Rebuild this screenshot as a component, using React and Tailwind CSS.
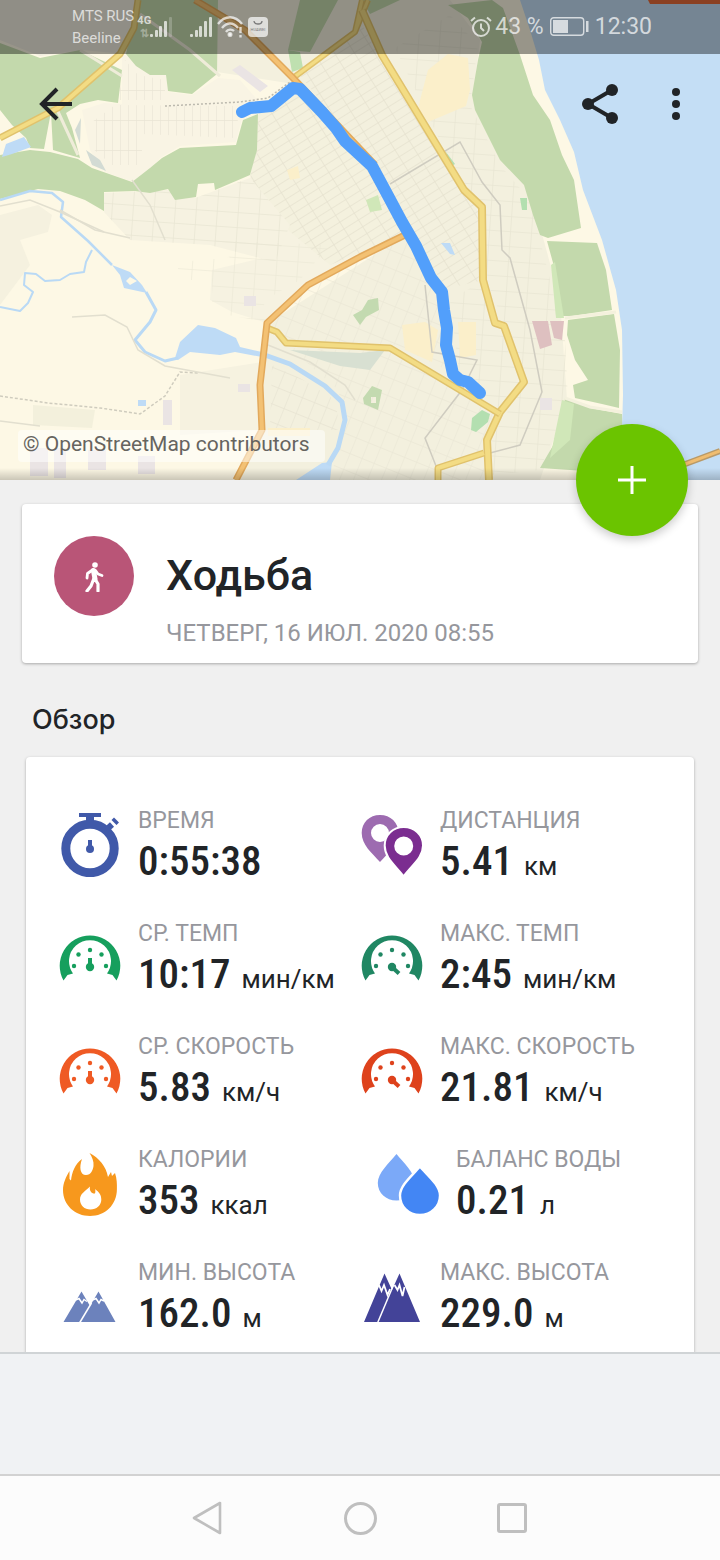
import { useState } from "react";

const BLUE = "#4059a9";

function Gauge({ color, max }) {
  return (
    <svg viewBox="0 3 64 64" className="w-16 h-16" fill={color}>
      <path d="M5.500 57.500 A30.300 30.300 0 1 1 58.500 57.500 L54.500 52 L49 50.500 A21 21 0 1 0 15 50.500 L9.500 52 Z" />
      <circle cx="16" cy="43" r="2.200" />
      <circle cx="20.500" cy="31.500" r="2.200" />
      <circle cx="32" cy="27" r="2.200" />
      <circle cx="43.500" cy="31.500" r="2.200" />
      <circle cx="48" cy="43" r="2.200" />
      <circle cx="32" cy="44" r="4.200" />
      <path
        d={max ? "M32 44 L39 50.500" : "M32 44 V35"}
        stroke={color}
        strokeWidth="4"
      />
    </svg>
  );
}

function Stopwatch() {
  return (
    <svg viewBox="0 0 64 64" className="w-16 h-16" fill="none">
      <circle cx="32" cy="35.500" r="24.200" stroke={BLUE} strokeWidth="9" />
      <path d="M21 0 H43 V4 H36 V10 H28 V4 H21 Z" fill={BLUE} />
      <path d="M48 17 L54 11.500" stroke={BLUE} strokeWidth="6" />
      <path d="M56 9.500 L58.500 7" stroke={BLUE} strokeWidth="7" />
    <circle cx="32" cy="36" r="4" fill={BLUE} />
      <path d="M32 36 V27" stroke={BLUE} strokeWidth="4" />
    </svg>
  );
}

function Pins() {
  return (
    <svg viewBox="0 0 64 64" className="w-16 h-16" fillRule="evenodd">
      <path
        fill="#9d6bb0"
        d="M20 2 C9.500 2 1.700 9.500 1.700 20 C1.700 32 12 40 20 49 C28 40 38.500 32 38.500 20 C38.500 9.500 30.500 2 20 2 Z M20 11 a9 9 0 1 1 0 18 a9 9 0 0 1 0 -18 Z"
      />
      <path
        fill="#7b2d90"
        stroke="#fff"
        strokeWidth="2"
        d="M43.700 14 C33 14 24.700 22 24.700 32.500 C24.700 45 35 52 43.700 63.300 C52 52 63 45 63 32.500 C63 22 54.500 14 43.700 14 Z M43.700 24.500 a8.500 8.500 0 1 1 0 17 a8.500 8.500 0 0 1 0 -17 Z"
      />
    </svg>
  );
}

function Flame() {
  return (
    <svg viewBox="0 0 64 64" className="w-16 h-16">
      <path
        fill="#f7981d"
        d="M31.500 1 C41 6 48 14 50 25 L53 20 L54 24 L57 21 C59 27 59 32 58.900 37 C58.900 53 47 64 32 64 C17 64 5 53 5 38 C5 31 8 25 11.500 19 L11.500 27 L13 28.500 C14 20 17 12 24 7 C21 15 22 23 28 23 C33 23 35 18 35.500 14 C36 9 34 5 31.500 1 Z"
      />
      <path
        fill="#fff"
        d="M32 34.500 C31 39 34 42 37 41.500 C37.500 39.500 37.500 38.500 37 37 C41 40 43.500 43 43.300 48 C43 53.500 38.500 57.500 32.500 57.500 C26.500 57.500 22 53.500 22 47.500 C22 41.500 27 39.500 32 34.500 Z"
      />
    </svg>
  );
}

function Drops() {
  return (
    <svg viewBox="0 0 64 64" className="w-16 h-16">
      <path
        fill="#7ba9f8"
        d="M20.500 2 C27 10 39 21 39 31 C39 41 31 48.500 20.500 48.500 C10 48.500 1.800 41 1.800 31 C1.800 21 13 11 20.500 2 Z"
      />
      <path
        fill="#4386f4"
        stroke="#fff"
        strokeWidth="2.400"
        d="M43.900 14.500 C51 23 64 33 64 43.500 C64 54.500 55 63 43.900 63 C32.500 63 24 54.500 24 43.500 C24 33 37 23 43.900 14.500 Z"
      />
    </svg>
  );
}

function LowPeaks() {
  return (
    <svg viewBox="0 0 64 64" className="w-16 h-16">
      <path fill="#6c82bc" d="M5.500 57 L23.500 26.500 L32 41 L40.500 26.500 L57.500 57 Z" />
      <path d="M21.500 58 L33.500 38" stroke="#fff" strokeWidth="1.500" />
      <path
        d="M17.500 35 L21 33.500 L24 38 L26 34.500 L29 36.500 M34.500 35 L38 33.500 L41 38 L43 34.500 L46 36"
        fill="none"
        stroke="#fff"
        strokeWidth="1.500"
      />
    </svg>
  );
}

function HighPeaks() {
  return (
    <svg viewBox="0 0 64 64" className="w-16 h-16">
      <path fill="#434398" d="M4 57 L24.500 8.500 L32 25 L39.500 8.500 L60 57 Z" />
      <path d="M17.500 58 L33.500 20" stroke="#fff" strokeWidth="1.500" />
      <path
        d="M19 20 L21.500 26 L24 20 L27.500 30 L30 24 M34.500 20 L37.500 25 L39.500 20 L42.500 31 L44.500 22"
        fill="none"
        stroke="#fff"
        strokeWidth="1.800"
      />
    </svg>
  );
}

function Road({ d, w = 7, fill = "#f3dc84", edge = "#e0c26c" }) {
  return (
    <g fill="none" strokeLinejoin="round">
      <path d={d} stroke={edge} strokeWidth={w} />
      <path d={d} stroke={fill} strokeWidth={w - 3} />
    </g>
  );
}

function RouteMap() {
  return (
    <svg
      viewBox="0 0 720 480"
      preserveAspectRatio="xMidYMid slice"
      className="block w-full h-full"
      role="img"
      aria-label="Маршрут"
    >
      <defs>
        <pattern id="blocks" width="17" height="8" patternUnits="userSpaceOnUse" patternTransform="rotate(-32)">
          <path d="M0 0 H17 M0 0 V8" stroke="#e6e2cf" fill="none" strokeWidth="1.500" />
        </pattern>
        <pattern id="grid" width="21" height="15" patternUnits="userSpaceOnUse" patternTransform="rotate(4)">
          <path d="M0 0 H21 M0 0 V15" stroke="#e9e6d4" fill="none" strokeWidth="1.500" />
        </pattern>
        <pattern id="lanes" width="8" height="30" patternUnits="userSpaceOnUse">
          <path d="M0 0 V30 M0 0 H8" stroke="#e9e5d5" fill="none" strokeWidth="1.300" />
        </pattern>
        <pattern id="slant" width="13" height="17" patternUnits="userSpaceOnUse" patternTransform="rotate(22)">
          <path d="M0 0 H13 M0 0 V17" stroke="#e7e4d2" fill="none" strokeWidth="1.300" />
        </pattern>
        <linearGradient id="fade" x1="0" y1="0" x2="0" y2="1">
          <stop offset="0" stopColor="#000" stopOpacity="0" />
          <stop offset="1" stopColor="#000" stopOpacity="0.200" />
        </linearGradient>
      </defs>

      <rect width="720" height="480" fill="#fdf8e5" />

      {/* built-up areas */}
      <path d="M0 0 H137 L125 54 L82 50 L40 56 L0 40 Z" fill="#f1eddf" />
      <path d="M217 0 H450 L480 40 L473 100 L530 190 L560 300 L567 400 L540 480 H240 L262 430 L265 325 L405 235 L330 215 L290 190 L256 180 L259 112 L300 85 L217 72 Z" fill="#f3f0de" />
      <path d="M405 235 L308 285 L267 323 L232 312 L210 300 L212 270 L275 255 L290 215 L330 205 Z" fill="#f6f2e1" />
      <path d="M258 115 L296 92 L372 170 L404 235 L330 265 L270 215 L250 180 Z" fill="#f4f1de" />
      <path d="M258 115 L296 92 L372 170 L404 235 L330 265 L270 215 L250 180 Z" fill="url(#blocks)" />
      <path d="M300 75 L362 25 L466 195 L480 210 L484 280 L440 290 L372 165 Z" fill="url(#blocks)" />
      <path d="M104 193 L168 190 L195 198 L250 178 L290 225 L275 262 L210 245 L130 240 L104 212 Z" fill="#f6f2e1" />
      <path d="M104 193 L168 190 L195 198 L250 178 L290 225 L275 262 L210 245 L130 240 L104 212 Z" fill="url(#grid)" />
      <path d="M82 110 L104 103 L122 104 L122 54 L128 56 L150 75 L166 75 L168 92 L192 95 L218 78 L240 80 L262 105 L242 118 L236 142 L180 146 L160 158 L145 178 L130 181 L105 172 L90 150 Z" fill="#f9f4e4" />
      <path d="M125 60 L138 75 L165 80 V100 H118 Z M92 122 L115 105 L240 106 L235 138 L142 134 V165 H112 L92 148 Z" fill="url(#lanes)" />
      <path d="M0 215 L38 205 L52 215 L48 232 L20 240 L30 265 L0 305 Z" fill="#f5f1df" />
      <path d="M178 262 L262 255 L265 322 L212 312 V280 H178 Z M215 240 L330 245 L300 280 L265 300 Z" fill="url(#grid)" opacity="0.700" />
      <path d="M310 285 L404 238 L440 290 L447 370 L395 345 L290 340 L268 325 Z" fill="url(#slant)" opacity="0.700" />
      <path d="M290 348 L392 352 L500 415 L486 440 L484 480 H330 L346 420 L338 390 Z" fill="url(#slant)" opacity="0.700" />
      <path d="M450 300 L484 280 L500 328 L524 382 L500 410 L460 380 Z" fill="url(#grid)" />
      <path d="M395 48 L450 15 L478 45 L470 105 L500 165 L530 200 L545 260 L565 340 L568 400 L540 470 L490 475 L490 440 L526 382 L505 325 L486 280 L484 205 L464 190 Z" fill="url(#grid)" />
      <path d="M180 375 L262 362 L262 430 L180 435 Z" fill="#f6f2e0" />
      <path d="M272 365 L300 378 L335 400 L340 430 L270 430 Z" fill="url(#slant)" />
      <path d="M33 405 L95 410 L92 428 L33 425 Z" fill="#f3f0dc" />

      {/* woodland */}
      <g fill="#c3d9ac">
        <path d="M137 0 H218 L217 74 L192 94 L168 91 L166 75 L150 75 L136 66 L126 54 Z" />
        <path d="M0 43 L40 58 L80 50 L122 70 L118 103 L98 100 L80 104 L66 113 L72 128 L80 158 L53 150 L51 112 L44 149 L30 148 L26 138 L12 125 L0 110 Z" />
        <path d="M0 155 L30 150 L50 152 L78 159 L92 168 L132 182 L150 168 L162 158 L180 148 L236 145 L243 120 L258 114 L257 150 L250 175 L215 190 L214 183 L198 184 L196 197 L175 200 L168 189 L150 193 L135 191 L104 192 V211 L85 200 L60 191 L38 189 L0 199 Z" />
        <path d="M300 0 H338 L310 52 L288 50 Z M362 0 H400 L370 14 Z" />
        <path d="M448 5 L492 0 L503 8 L520 55 L533 95 L550 120 L562 155 L574 180 L581 228 L548 238 L540 235 L533 215 L524 185 L500 160 L475 110 L472 95 L478 60 L482 42 L468 18 Z" />
        <path d="M547 241 L597 243 L606 270 L612 310 L572 316 L556 316 L555 270 Z" />
        <path d="M568 320 L614 314 L620 350 L619 408 L602 404 L575 398 L573 385 L588 380 L575 360 L567 335 Z" />
        <path d="M565 398 L590 408 L622 414 L624 440 L650 475 L600 472 L540 468 L562 430 Z" />
      </g>
      <g fill="#d0e7b8">
        <path d="M551 265 L556 318 L564 318 L555 262 Z M562 400 L574 404 L570 440 L550 458 Z" />
        <path d="M366 200 L378 195 L382 210 L370 212 Z" />
      </g>
      <path d="M288 50 L300 52 L303 68 L292 72 Z" fill="#bfe0b0" />
      <path d="M353 315 L362 310 L368 300 L378 298 L379 310 L366 317 L360 325 Z" fill="#c3dab0" />
      <path d="M363 398 L372 386 L382 390 L378 410 L364 404 Z M371 397 h5 v6 h-5 Z" fill="#c3dab0" fillRule="evenodd" />
      <path d="M472 418 L482 410 L490 414 L488 422 L476 432 L471 430 Z M446 152 L455 164 L450 167 Z M520 198 h7 v12 h-5 Z" fill="#b3dfb0" />

      {/* quarters */}
      <g fill="#fbefca">
        <path d="M428 70 L448 54 L468 58 L470 90 L466 106 L428 122 L418 108 L424 85 Z" />
        <path d="M402 325 L425 322 L438 330 L432 362 L405 350 Z M458 322 H476 V355 L460 358 Z" />
        <path d="M268 428 H310 V436 H268 Z M287 170 L298 166 L300 178 L290 180 Z" />
      </g>
      <path d="M532 321 H548 L552 345 L540 349 Z M550 321 H564 L562 340 L554 338 Z" fill="#dec0c0" />
      <g fill="#eae4e4">
        <path d="M30 448 H48 V476 H30 Z M54 448 H66 V478 H54 Z M88 450 H106 V470 H88 Z M138 456 H155 V474 H138 Z M163 400 H172 V425 H163 Z" />
        <path d="M232 70 L240 65 L268 86 L260 92 Z M244 296 h12 v10 h-12 Z M238 384 h12 v8 h-12 Z M540 398 h12 v12 h-12 Z" />
      </g>
      <path d="M290 350 L360 353 L385 350 L370 370 L340 366 Z" fill="#d8e0d2" />
      <path d="M75 130 L81 118 L80 144 Z M86 150 L100 160 L106 171 L92 165 Z" fill="#d3dbd4" />

      {/* water */}
      <path d="M520 0 H720 V480 H640 L622 430 L623 395 L622 330 L616 290 L602 240 L583 190 L574 152 L560 120 L545 90 L539 60 L530 30 Z" fill="#c4def5" />
      <g fill="#bedbf6">
        <path d="M2 157 L6 144 L24 137 L31 147 L12 154 Z" />
        <path d="M175 358 L180 342 L198 325 L215 328 L236 338 L240 347 L262 352 L262 357 L235 352 L220 355 L190 352 L178 360 Z" />
        <path d="M112 265 L130 272 L142 285 L147 293 L124 288 L120 275 Z" />
        <path d="M296 480 L322 463 L332 462 L330 480 Z M138 400 h8 v6 h-8 Z M441 243 L450 243 L455 255 L450 254 Z" />
      </g>
      <path d="M130 277 L137 281 L130 285 L126 281 Z" fill="#fdf8e5" />
      <g fill="none" stroke="#b9d9f5" strokeLinejoin="round">
        <path d="M0 200 L30 191 L52 193 L63 202 L61 217 L88 241 L112 265" strokeWidth="2.500" />
        <path d="M92 250 L86 262 L84 272 L70 274 L60 280 L45 281 L36 274 L25 273 L24 285 L33 292 L28 303 L20 311 L0 307" strokeWidth="2" />
        <path d="M146 292 L156 310 L150 322 L135 340 L145 352 L165 361 L178 358" strokeWidth="3" />
        <path d="M262 354 L290 364 L325 386 L342 402 L345 420 L338 448 L328 465" strokeWidth="5" />
      </g>

      {/* minor roads and rails */}
      <g fill="none" stroke="#e2dfcf" strokeWidth="1.500">
        <path d="M0 396 L48 403 L100 408 L140 414 L165 396 L180 372 L198 373" strokeDasharray="3 2" stroke="#cfccbe" />
        <path d="M72 317 L105 315 L127 327 L138 350 L165 366 L230 378" />
        <path d="M0 421 L40 426 M0 206 L30 200 L60 212 L104 232 M132 180 L150 205 L165 240" />
        <path d="M60 210 L95 230 L130 238 M268 345 L310 362 L345 385 L355 400" />
        <path d="M165 106 L240 102 L268 98 L290 82" strokeDasharray="2 2" stroke="#bcb9ae" />
        <path d="M390 184 L460 142 L482 182 L500 205 L502 250 L510 258 L530 330 L542 392 L520 445 L490 453" stroke="#cfccc0" />
        <path d="M425 285 L432 352 L477 360 L462 390 L425 438 L436 466" stroke="#cfccc0" />
      </g>
      <path d="M140 14 L190 50 L220 76 M80 50 L122 76 M55 105 L78 155" fill="none" stroke="#efecd9" strokeWidth="3" />
      <path d="M565 318 L616 312 M565 398 L590 407 L622 412" fill="none" stroke="#f4f1dd" strokeWidth="3" />

      {/* main roads */}
      <Road d="M0 138 L58 108 L120 54 L134 28 L138 0" />
      <Road d="M293 78 L355 32 L362 0 M355 32 L368 0" w={6} />
      <Road d="M362 10 L382 55 L464 190 L482 207 L483 280 L495 323 L504 326 L524 382 L500 412 L487 440 L489 480" w={8} />
      <Road d="M267 328 L277 332 L286 343 L390 348 L500 414" w={7} />
      <Road d="M484 453 L438 468 V480" w={7} />
      <Road d="M195 0 L245 30 L293 78 L375 165" fill="#f3c173" edge="#e2a95c" />
      <Road d="M405 235 L360 257 L308 285 L267 323 L260 385 L262 430 L236 480" fill="#f3c173" edge="#e2a95c" />
      <Road d="M680 466 L720 451" w={6} fill="#f0bd70" edge="#b99a68" />
      <path d="M648 0 H720 V4 H650 Z" fill="#e86c38" />

      {/* recorded track */}
      <path
        d="M242 112 L250 108 L271 106 L293 88 L300 89 L322 112 L336 128 L345 141 L372 166 L386 192 L402 222 L416 246 L431 278 L442 292 L444 310 L447 328 L446 345 L450 360 L453 374 L460 380 L468 382 L480 393"
        fill="none"
        stroke="#529ffb"
        strokeWidth="12"
        strokeLinecap="round"
        strokeLinejoin="round"
      />
      <rect y="468" width="720" height="12" fill="url(#fade)" />
    </svg>
  );
}

function Signal({ faded }) {
  return (
    <svg viewBox="0 0 22 20" className="w-[22px] h-5" fill="currentColor">
      <rect x="0" y="17" width="3" height="3" rx="1" />
      <rect x="5" y="13" width="3" height="7" rx="1" />
      <rect x="9" y="9" width="3" height="11" rx="1" />
      <rect x="14" y="4" width="3" height="16" rx="1" />
      <rect x="19" y="0" width="3" height="20" rx="1" opacity={faded ? 0.3 : 1} />
    </svg>
  );
}

function StatusBar() {
  return (
    <div className="h-[54px] px-[68px] flex items-center justify-between bg-black/40 text-white/70">
      <div className="flex items-center pl-1">
        <div className="text-[15px] leading-[22px]">
          <div>MTS RUS</div>
          <div>Beeline</div>
        </div>
        <div className="flex flex-col items-center ml-1 w-3 text-[11px] leading-[13px] font-bold">
          <span>4G</span>
          <span className="opacity-50 font-['Liberation_Sans',sans-serif]">⇅</span>
        </div>
        <Signal faded />
        <div className="w-[18px]" />
        <Signal />
        <svg viewBox="0 0 28 22" className="w-7 h-[22px] ml-[5px]" fill="none" stroke="currentColor" strokeWidth="2.400">
          <path d="M1 8 C8 -1 18 -1 25 8 M5 12 C10 6 16 6 21 12 M9 16 C11 13 15 13 17 15" />
          <circle cx="13" cy="18.500" r="1.300" fill="currentColor" />
          <path d="M23.500 11 V17 M23.500 19 V21.500" />
        </svg>
        <svg viewBox="0 0 20 20" className="w-5 h-5 ml-[3px]">
          <rect width="20" height="20" rx="4" fill="currentColor" />
          <path d="M6 4 C6 8 14 8 14 4" fill="none" stroke="#777" strokeWidth="1.300" />
          <text x="10" y="14" fontSize="4" textAnchor="middle" fill="#777">HUAWEI</text>
        </svg>
      </div>
      <div className="flex items-center gap-[3px] text-[23px] leading-8">
        <svg viewBox="0 0 22 22" className="w-[22px] h-[22px]" fill="none" stroke="currentColor" strokeWidth="2">
          <circle cx="11" cy="12" r="8" />
          <path d="M11 7.500 V12 L14 15 M1 5 L5 1.500 M21 5 L17 1.500" />
        </svg>
        <span>43 %</span>
        <svg viewBox="0 0 39 20" className="w-[39px] h-5 mx-[3px]">
          <rect x="0.700" y="0.700" width="33" height="17.600" rx="3" fill="none" stroke="currentColor" strokeWidth="1.400" />
          <rect x="3" y="3" width="15" height="13" fill="currentColor" />
          <rect x="36" y="4" width="2.500" height="11" fill="currentColor" />
        </svg>
        <span>12:30</span>
      </div>
    </div>
  );
}

const METRICS = [
  { icon: <Stopwatch />, label: "ВРЕМЯ", value: "0:55:38" },
  { icon: <Pins />, label: "ДИСТАНЦИЯ", value: "5.41", unit: "км" },
  { icon: <Gauge color="#169f5d" />, label: "СР. ТЕМП", value: "10:17", unit: "мин/км" },
  { icon: <Gauge color="#208763" max />, label: "МАКС. ТЕМП", value: "2:45", unit: "мин/км" },
  { icon: <Gauge color="#ef5a24" />, label: "СР. СКОРОСТЬ", value: "5.83", unit: "км/ч" },
  { icon: <Gauge color="#de421c" max />, label: "МАКС. СКОРОСТЬ", value: "21.81", unit: "км/ч" },
  { icon: <Flame />, label: "КАЛОРИИ", value: "353", unit: "ккал" },
  { icon: <Drops />, label: "БАЛАНС ВОДЫ", value: "0.21", unit: "л", inset: true },
  { icon: <LowPeaks />, label: "МИН. ВЫСОТА", value: "162.0", unit: "м" },
  { icon: <HighPeaks />, label: "МАКС. ВЫСОТА", value: "229.0", unit: "м" },
];

function Metric({ icon, label, value, unit, inset }) {
  return (
    <div className={inset ? "flex items-start gap-4 pl-4" : "flex items-start gap-4"}>
      <div className="shrink-0 pt-2">{icon}</div>
      <dl className="whitespace-nowrap">
        <dt className="text-[23px] leading-8 text-[#96979d]">{label}</dt>
        <dd className="flex items-baseline gap-[11px]">
          <span className="font-['Roboto_Condensed',Roboto,sans-serif] text-[41px] leading-[48px] font-medium">{value}</span>
          {unit && <span className="text-[26px] leading-8">{unit}</span>}
        </dd>
      </dl>
    </div>
  );
}

export default function App() {
  const [menuOpen, setMenuOpen] = useState(false);

  return (
    <div className="h-screen flex flex-col bg-[#f0f0f0] text-[#212427] font-[Roboto,sans-serif]">
      <div className="relative flex-1 min-h-0 overflow-hidden">
        <section className="relative h-[480px]">
          <RouteMap />
          <header className="absolute inset-x-0 top-0">
            <StatusBar />
            <div className="h-[100px] pl-8 pr-5 flex items-center justify-between">
              <button aria-label="Назад" className="w-12 h-12 flex items-center justify-center">
                <svg viewBox="0 0 34 34" className="w-[34px] h-[34px]" fill="none" stroke="currentColor" strokeWidth="4">
                  <path d="M33 17 H3 M18 2 L3 17 L18 32" />
                </svg>
              </button>
              <div className="flex items-center gap-7">
                <button aria-label="Поделиться" className="w-12 h-12 flex items-center justify-center">
                  <svg viewBox="0 0 38 42" className="w-[38px] h-[42px]" fill="currentColor">
                    <path d="M31 7 L7 21 L31 35" fill="none" stroke="currentColor" strokeWidth="4" />
                    <circle cx="7" cy="21" r="6" />
                    <circle cx="31" cy="7" r="6" />
                    <circle cx="31" cy="35" r="6" />
                  </svg>
                </button>
                <button
                  aria-label="Ещё"
                  aria-expanded={menuOpen}
                  onClick={() => setMenuOpen(!menuOpen)}
                  className="w-12 h-12 flex items-center justify-center"
                >
                  <svg viewBox="0 0 8 32" className="w-2 h-8" fill="currentColor">
                    <circle cx="4" cy="4" r="4" />
                    <circle cx="4" cy="16" r="4" />
                    <circle cx="4" cy="28" r="4" />
                  </svg>
                </button>
              </div>
            </div>
          </header>
          <p className="absolute left-[18px] bottom-[18px] h-8 pl-[5px] pr-4 rounded-sm bg-white/50 text-[21px] leading-7 text-[#66645f]">
            © OpenStreetMap contributors
          </p>
          <button
            aria-label="Добавить"
            className="absolute z-10 right-8 -bottom-14 w-28 h-28 rounded-full bg-[#6bc400] shadow-[0_4px_10px_rgba(0,0,0,0.2)] flex items-center justify-center"
          >
            <svg viewBox="0 0 28 28" className="w-7 h-7" stroke="#fff" strokeWidth="3">
              <path d="M14 0 V28 M0 14 H28" />
            </svg>
          </button>
        </section>

        <section className="mx-[22px] mt-6 h-[159px] p-8 flex items-start gap-8 bg-white rounded shadow-[0_1px_3px_rgba(0,0,0,0.3)]">
          <div className="w-20 h-20 shrink-0 rounded-full bg-[#b95577] flex items-center justify-center">
            <svg viewBox="0 0 20 32" className="w-5 h-8" fill="none" stroke="#fff" strokeLinecap="round" strokeLinejoin="round">
              <circle cx="11" cy="5" r="2.800" fill="#fff" stroke="none" />
              <path d="M9.500 10.500 L11 19" strokeWidth="5" />
              <path d="M8.500 10 L3.500 13.500 L3 18 M11.500 10.500 L14 14 L18 15.500" strokeWidth="2.800" />
              <path d="M9.500 19.500 L7 26 L3 31 M11 19 L14 24 L14 31" strokeWidth="3.200" />
            </svg>
          </div>
          <div className="whitespace-nowrap pt-[15px]">
            <h1 className="text-[43px] leading-[48px] font-medium">Ходьба</h1>
            <p className="pt-[18px] text-2xl leading-8 text-[#96979d]">ЧЕТВЕРГ, 16 ИЮЛ. 2020 08:55</p>
          </div>
        </section>

        <h2 className="mx-8 mt-[41px] text-[27px] leading-8 font-medium font-[Inter,sans-serif]">Обзор</h2>

        <section className="mx-[26px] mt-[21px] px-8 pt-12 pb-16 grid grid-cols-2 gap-y-[33px] bg-white rounded shadow-[0_1px_3px_rgba(0,0,0,0.3)]">
          {METRICS.map((m) => (
            <Metric key={m.label} {...m} />
          ))}
        </section>
      </div>

      <div className="relative h-[122px] border-t-2 border-[#d0d4d6] bg-[#f0f2f4]" />

      <nav className="h-[86px] border-t-2 border-[#d2d2d2] bg-[#fcfcfc] flex items-center justify-center gap-[104px] text-[#bfbfbf]">
        <button aria-label="Назад" className="w-12 h-12 flex items-center justify-center">
          <svg viewBox="2 0 32 34" className="w-8 h-[34px]" fill="none" stroke="currentColor" strokeWidth="2.600" strokeLinejoin="round">
            <path d="M30 2 V32 L4 17 Z" />
          </svg>
        </button>
        <button aria-label="Домой" className="w-12 h-12 flex items-center justify-center">
          <span className="w-[33px] h-[33px] rounded-full border-[3px] border-current" />
        </button>
        <button aria-label="Недавние" className="w-12 h-12 flex items-center justify-center">
          <span className="w-[30px] h-[30px] rounded-[3px] border-[3px] border-current" />
        </button>
      </nav>
    </div>
  );
}
